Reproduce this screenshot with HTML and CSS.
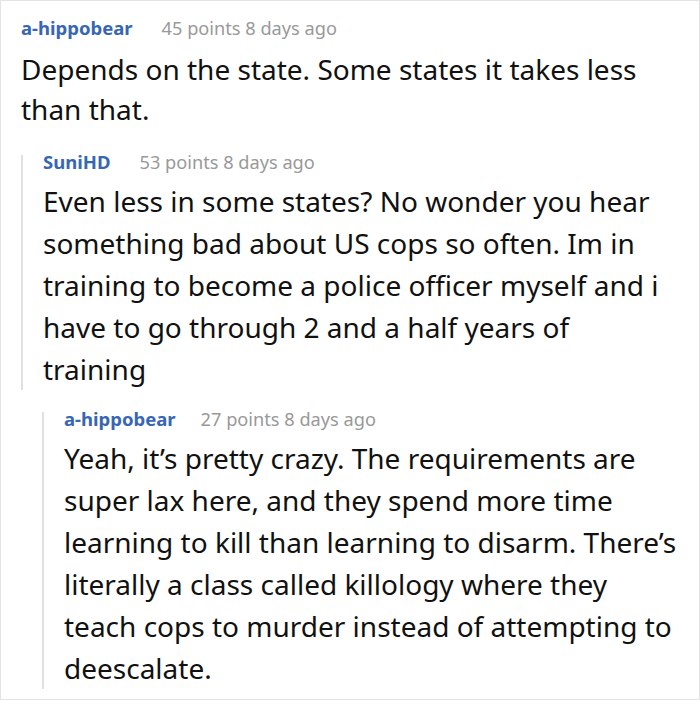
FILE: index.html
```html
<!DOCTYPE html>
<html>
<head>
<meta charset="utf-8">
<link rel="stylesheet" href="styles.css">
</head>
<body>
<div class="frame">
  <div class="comment top">
    <div class="meta"><span class="user">a-hippobear</span><span class="info">45 points 8 days ago</span></div>
    <p class="text">Depends on the state. Some states it takes less than that.</p>
    <div class="comment child child1">
      <div class="meta"><span class="user">SuniHD</span><span class="info">53 points 8 days ago</span></div>
      <p class="text">Even less in some states? No wonder you hear something bad about US cops so often. Im in training to become a police officer myself and i have to go through 2 and a half years of training</p>
    </div>
    <div class="comment child child2">
      <div class="meta"><span class="user">a-hippobear</span><span class="info">27 points 8 days ago</span></div>
      <p class="text">Yeah, it’s pretty crazy. The requirements are super lax here, and they spend more time learning to kill than learning to disarm. There’s literally a class called killology where they teach cops to murder instead of attempting to deescalate.</p>
    </div>
  </div>
</div>
</body>
</html>
```
FILE: styles.css
```css
html, body {
  margin: 0;
  padding: 0;
  background: #ffffff;
}
.frame {
  box-sizing: border-box;
  width: 700px;
  height: 700px;
  border: 1px solid #e3e3e3;
  padding: 20px 19px 0 20px;
  font-family: "Noto Sans", "Open Sans", sans-serif;
  color: #111111;
  overflow: hidden;
}
.meta {
  display: flex;
  align-items: center;
  gap: 29px;
  height: 14px;
  line-height: 14px;
  white-space: nowrap;
}
.user {
  font-size: 18.5px;
  font-weight: 700;
  color: #3766b4;
}
.info {
  font-size: 18.2px;
  color: #999999;
}
.text {
  margin: 14px 0 0 0;
  font-size: 28px;
  line-height: 40px;
}
.child {
  margin-top: 26px;
  border-left: 2px solid #e0e0e0;
  padding-left: 20px;
}
.child .text {
  margin-top: 11px;
  margin-bottom: -13px;
  line-height: 42px;
}
.child1 {
  margin-right: 5px;
}
.child2 {
  margin-left: 21px;
  margin-top: 35px;
}
.child2 .meta {
  gap: 25px;
}
```
